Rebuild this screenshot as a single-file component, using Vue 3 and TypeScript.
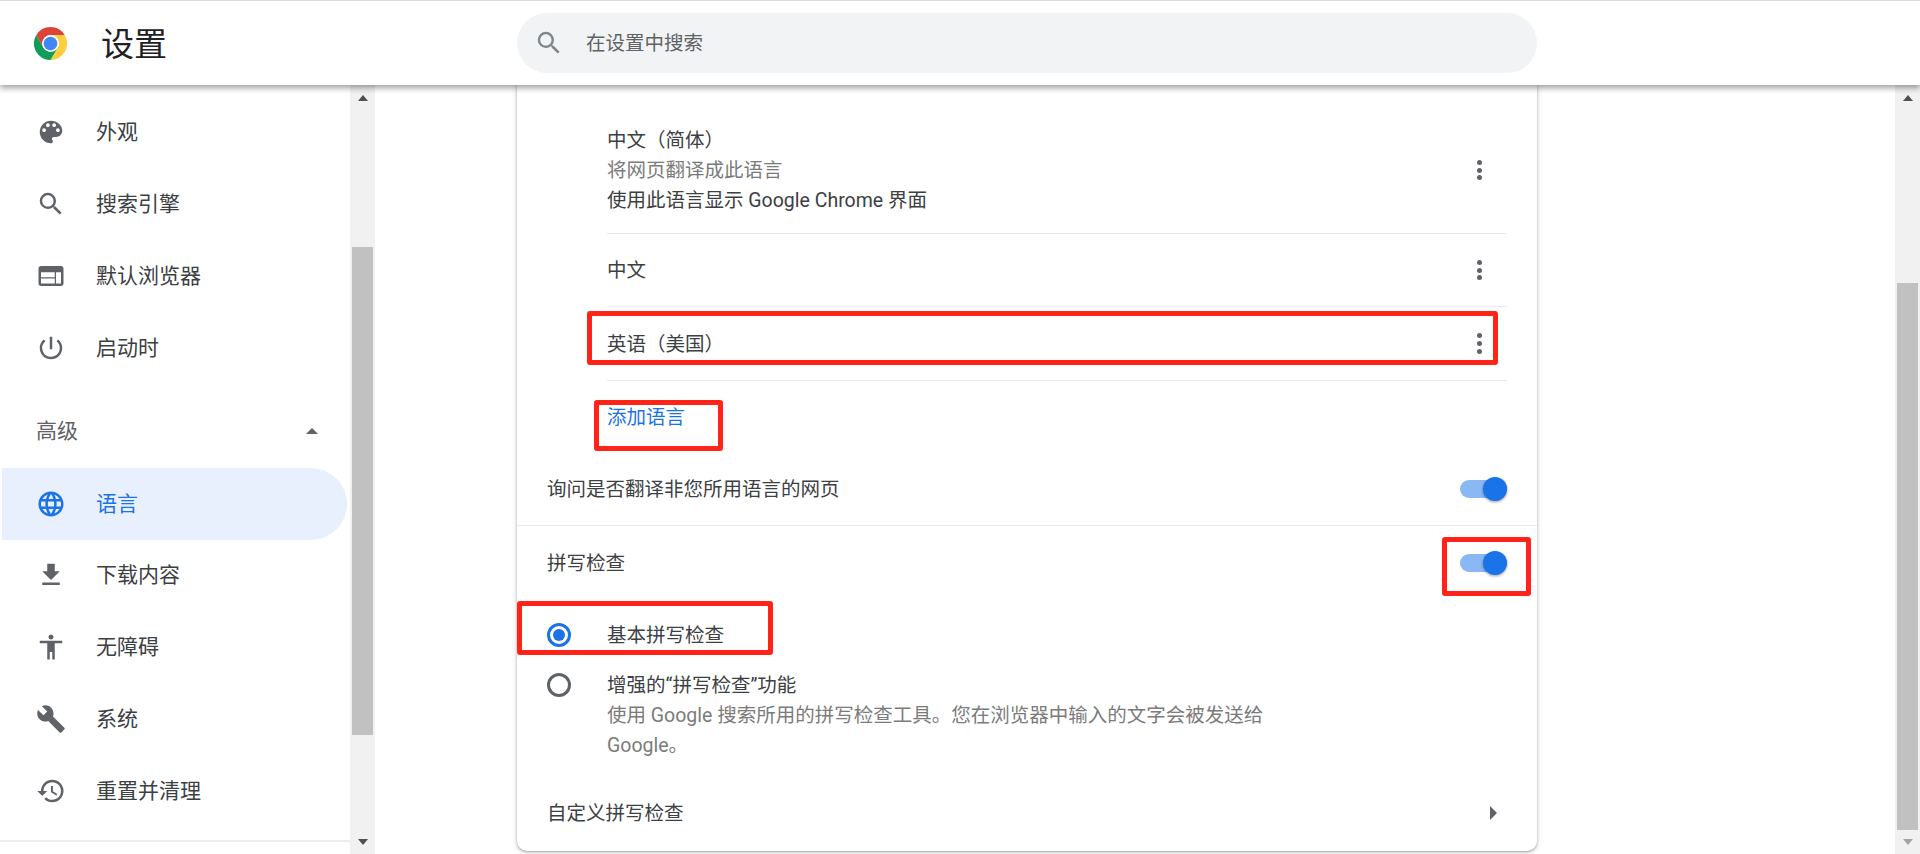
<script setup lang="ts">
interface NavItem {
  label: string;
  icon: string;
  active?: boolean;
}

const paths: Record<string, string> = {
  palette:
    'M12 3a9 9 0 0 0 0 18c.83 0 1.5-.67 1.5-1.5 0-.39-.15-.74-.39-1.01-.23-.26-.38-.61-.38-.99 0-.83.67-1.5 1.5-1.5H16c2.76 0 5-2.24 5-5 0-4.42-4.03-8-9-8zm-5.5 9c-.83 0-1.5-.67-1.5-1.5S5.67 9 6.5 9 8 9.67 8 10.5 7.33 12 6.5 12zm3-4C8.67 8 8 7.33 8 6.5S8.67 5 9.5 5s1.5.67 1.5 1.5S10.33 8 9.5 8zm5 0c-.83 0-1.5-.67-1.5-1.5S13.67 5 14.5 5s1.5.67 1.5 1.5S15.33 8 14.5 8zm3 4c-.83 0-1.5-.67-1.5-1.5S16.67 9 17.5 9s1.5.67 1.5 1.5-.67 1.5-1.5 1.5z',
  search:
    'M15.5 14h-.79l-.28-.27A6.471 6.471 0 0 0 16 9.5 6.5 6.5 0 1 0 9.5 16c1.61 0 3.09-.59 4.23-1.57l.27.28v.79l5 4.99L20.49 19l-4.99-5zm-6 0C7.01 14 5 11.99 5 9.5S7.01 5 9.5 5 14 7.01 14 9.5 11.99 14 9.5 14z',
  web: 'M20 4H4c-1.1 0-2 .9-2 2v12c0 1.1.9 2 2 2h16c1.1 0 2-.9 2-2V6c0-1.1-.9-2-2-2zm-5 14H4v-4h11v4zm0-5H4V9h11v4zm5 5h-4V9h4v9z',
  power:
    'M13 3h-2v10h2V3zm4.83 2.17l-1.42 1.42A6.92 6.92 0 0 1 19 12c0 3.87-3.13 7-7 7A6.995 6.995 0 0 1 7.58 6.58L6.17 5.17A8.932 8.932 0 0 0 3 12a9 9 0 0 0 18 0c0-2.74-1.23-5.18-3.17-6.83z',
  language:
    'M11.99 2C6.47 2 2 6.48 2 12s4.47 10 9.99 10C17.52 22 22 17.52 22 12S17.52 2 11.99 2zm6.93 6h-2.95a15.65 15.65 0 0 0-1.38-3.56A8.03 8.03 0 0 1 18.92 8zM12 4.04c.83 1.2 1.48 2.53 1.91 3.96h-3.82c.43-1.43 1.08-2.76 1.91-3.96zM4.26 14C4.1 13.36 4 12.69 4 12s.1-1.36.26-2h3.38c-.08.66-.14 1.32-.14 2 0 .68.06 1.34.14 2H4.26zm.82 2h2.95c.32 1.25.78 2.45 1.38 3.56A7.987 7.987 0 0 1 5.08 16zm2.95-8H5.08a7.987 7.987 0 0 1 4.33-3.56A15.65 15.65 0 0 0 8.03 8zM12 19.96c-.83-1.2-1.48-2.53-1.91-3.96h3.82c-.43 1.43-1.08 2.76-1.91 3.96zM14.34 14H9.66c-.09-.66-.16-1.32-.16-2 0-.68.07-1.35.16-2h4.68c.09.65.16 1.32.16 2 0 .68-.07 1.34-.16 2zm.25 5.56c.6-1.11 1.06-2.31 1.38-3.56h2.95a8.03 8.03 0 0 1-4.33 3.56zM16.36 14c.08-.66.14-1.32.14-2 0-.68-.06-1.34-.14-2h3.38c.16.64.26 1.31.26 2s-.1 1.36-.26 2h-3.38z',
  download: 'M19 9h-4V3H9v6H5l7 7 7-7zM5 18v2h14v-2H5z',
  accessibility:
    'M12 2c1.1 0 2 .9 2 2s-.9 2-2 2-2-.9-2-2 .9-2 2-2zm9 7h-6v13h-2v-6h-2v6H9V9H3V7h18v2z',
  build:
    'M22.7 19l-9.1-9.1c.9-2.3.4-5-1.5-6.9-2-2-5-2.4-7.4-1.3L9 6 6 9 1.6 4.7C.4 7.1.9 10.1 2.9 12.1c1.9 1.9 4.6 2.4 6.9 1.5l9.1 9.1c.4.4 1 .4 1.4 0l2.3-2.3c.5-.4.5-1.1.1-1.4z',
  restore:
    'M13 3a9 9 0 0 0-9 9H1l3.89 3.89.07.14L9 12H6c0-3.87 3.13-7 7-7s7 3.13 7 7-3.13 7-7 7c-1.93 0-3.68-.79-4.94-2.06l-1.42 1.42A8.954 8.954 0 0 0 13 21a9 9 0 0 0 0-18zm-1 5v5l4.28 2.54.72-1.21-3.5-2.08V8H12z',
};

const topItems: NavItem[] = [
  { label: '外观', icon: 'palette' },
  { label: '搜索引擎', icon: 'search' },
  { label: '默认浏览器', icon: 'web' },
  { label: '启动时', icon: 'power' },
];

const advancedItems: NavItem[] = [
  { label: '语言', icon: 'language', active: true },
  { label: '下载内容', icon: 'download' },
  { label: '无障碍', icon: 'accessibility' },
  { label: '系统', icon: 'build' },
  { label: '重置并清理', icon: 'restore' },
];

const redSector: string =
  'M24 0A24 24 0 0 0 3.2 12L13.6 30A12 12 0 0 1 24 12H44.8A24 24 0 0 0 24 0z';
</script>

<template>
  <div class="page">
    <header class="topbar">
      <div class="brand">
        <svg class="logo" viewBox="0 0 48 48">
          <path fill="#db4437" :d="redSector" />
          <path fill="#ffcd40" :d="redSector" transform="rotate(120 24 24)" />
          <path fill="#0f9d58" :d="redSector" transform="rotate(240 24 24)" />
          <circle cx="24" cy="24" r="12" fill="#fff" />
          <circle cx="24" cy="24" r="10" fill="#4285f4" />
        </svg>
        <h1 class="title">设置</h1>
      </div>
      <div class="search">
        <svg class="search-icon" viewBox="0 0 24 24"><path :d="paths.search" /></svg>
        <span class="txt">在设置中搜索</span>
      </div>
    </header>

    <div class="body">
      <aside class="sidebar">
        <nav class="nav">
          <a v-for="item in topItems" :key="item.label" class="nav-item">
            <svg class="nav-icon" viewBox="0 0 24 24"><path :d="paths[item.icon]" /></svg>
            <span>{{ item.label }}</span>
          </a>
          <div class="advanced">
            <span>高级</span>
            <i class="caret"></i>
          </div>
          <a
            v-for="item in advancedItems"
            :key="item.label"
            class="nav-item"
            :class="{ active: item.active }"
          >
            <svg class="nav-icon" viewBox="0 0 24 24"><path :d="paths[item.icon]" /></svg>
            <span>{{ item.label }}</span>
          </a>
        </nav>
        <div class="nav-rule"></div>
      </aside>

      <div class="scrollbar side-scroll">
        <i class="arrow up"></i>
        <div class="thumb"></div>
        <i class="arrow down"></i>
      </div>

      <main class="content">
        <section class="card">
          <div class="lang-list">
            <div class="lang-row first">
              <div class="txt">
                <div>中文（简体）</div>
                <div class="muted">将网页翻译成此语言</div>
                <div>使用此语言显示 Google Chrome 界面</div>
              </div>
              <span class="dots"><i></i><i></i><i></i></span>
            </div>
            <div class="lang-row">
              <div class="txt">中文</div>
              <span class="dots"><i></i><i></i><i></i></span>
            </div>
            <div class="lang-row third">
              <div class="txt">英语（美国）</div>
              <span class="dots"><i></i><i></i><i></i></span>
            </div>
            <div class="add-lang"><span class="txt">添加语言</span></div>
          </div>

          <div class="setting translate">
            <span class="txt">询问是否翻译非您所用语言的网页</span>
            <span class="toggle"><i></i></span>
          </div>
          <div class="setting spell">
            <span class="txt">拼写检查</span>
            <span class="toggle"><i></i></span>
          </div>

          <div class="radio-row basic">
            <span class="radio checked"><i></i></span>
            <span class="txt">基本拼写检查</span>
          </div>
          <div class="radio-row enhanced">
            <span class="radio"></span>
            <div class="radio-text">
              <div>增强的“拼写检查”功能</div>
              <div class="muted">使用 Google 搜索所用的拼写检查工具。您在浏览器中输入的文字会被发送给 Google。</div>
            </div>
          </div>

          <div class="setting custom">
            <span class="txt">自定义拼写检查</span>
            <i class="chevron"></i>
          </div>

          <div class="mark mark-english"></div>
          <div class="mark mark-add"></div>
          <div class="mark mark-toggle"></div>
          <div class="mark mark-radio"></div>
        </section>
      </main>

      <div class="scrollbar page-scroll">
        <i class="arrow up"></i>
        <div class="thumb"></div>
        <i class="arrow down light"></i>
      </div>
    </div>
  </div>
</template>

<style>
html,
body {
  margin: 0;
  background: #fff;
  overflow: hidden;
}
</style>

<style scoped>
.page {
  height: 854px;
  display: flex;
  flex-direction: column;
  overflow: hidden;
  color: #3c4043;
  font-family: Roboto, "Noto Sans CJK SC", sans-serif;
  font-size: 19.5px;
  line-height: 30px;
}

/* centred rows: 2px of top padding moves the text down by one pixel */
.txt {
  padding-top: 2px;
}

.topbar {
  position: relative;
  z-index: 2;
  flex: 0 0 85px;
  box-sizing: border-box;
  display: flex;
  align-items: center;
  background: #fff;
  border-top: 1px solid #dadce0;
  box-shadow: 0 3px 6px rgba(0, 0, 0, 0.38);
}

.brand {
  flex: 0 0 517px;
  display: flex;
  align-items: center;
}

.logo {
  width: 33px;
  height: 33px;
  margin-left: 34px;
}

.title {
  margin: 3px 0 0 34px;
  font-size: 33px;
  line-height: 40px;
  font-weight: 400;
  color: #202124;
}

.search {
  width: 1020px;
  height: 60px;
  box-sizing: border-box;
  display: flex;
  align-items: center;
  gap: 22px;
  padding-left: 17px;
  border-radius: 30px;
  background: #f1f3f4;
  color: #5f6368;
}

.search-icon {
  width: 30px;
  height: 30px;
  fill: #80868b;
}

.body {
  flex: 1;
  display: flex;
  min-height: 0;
}

.sidebar {
  flex: 0 0 350px;
  display: flex;
  flex-direction: column;
  font-size: 21px;
}

.nav {
  flex: 1;
  padding-top: 11px;
}

.nav-item {
  height: 72px;
  display: flex;
  align-items: center;
  gap: 30px;
  padding-left: 36px;
}

.nav-item.active {
  margin: 1px 3px -1px 2px;
  padding-left: 34px;
  border-radius: 0 36px 36px 0;
  background: #e8f0fe;
  color: #1a73e8;
}

.nav-icon {
  width: 30px;
  height: 30px;
  fill: #5f6368;
}

.active .nav-icon {
  fill: #1a73e8;
}

.advanced {
  height: 72px;
  margin-top: 11px;
  padding: 0 32px 0 36px;
  display: flex;
  align-items: center;
  justify-content: space-between;
  color: #5f6368;
}

.caret {
  width: 0;
  height: 0;
  border-left: 6.5px solid transparent;
  border-right: 6.5px solid transparent;
  border-bottom: 6.5px solid #5f6368;
}

.nav-rule {
  height: 2px;
  margin-bottom: 12px;
  background: #eceded;
}

.scrollbar {
  flex: 0 0 25px;
  display: flex;
  flex-direction: column;
  align-items: center;
  background: #f1f1f1;
}

.thumb {
  width: 21px;
  background: #c1c1c1;
}

.side-scroll .thumb {
  height: 488px;
  margin-top: 162px;
}

.page-scroll .thumb {
  height: 547px;
  margin-top: 198px;
}

.arrow {
  width: 0;
  height: 0;
  border-left: 5.5px solid transparent;
  border-right: 5.5px solid transparent;
}

.arrow.up {
  margin-top: 10px;
  margin-bottom: -16px;
  border-bottom: 6px solid #505050;
}

.arrow.down {
  border-top: 6px solid #505050;
}

.arrow.down.light {
  border-top-color: #a3a3a3;
}

.side-scroll .arrow.down {
  margin-top: 104px;
}

.page-scroll .arrow.down {
  margin-top: 9px;
}

.content {
  flex: 1;
  min-width: 0;
  padding-left: 142px;
}

.card {
  position: relative;
  width: 1020px;
  height: 766px;
  border-radius: 0 0 10px 10px;
  background: #fff;
  box-shadow: 0 1px 2px rgba(60, 64, 67, 0.35), 0 1px 4px 1px rgba(60, 64, 67, 0.18);
}

.lang-list {
  padding: 0 30px 0 90px;
}

.lang-row {
  height: 72px;
  display: flex;
  align-items: center;
  justify-content: space-between;
  border-bottom: 1px solid #e8eaed;
}

.lang-row.first {
  box-sizing: border-box;
  height: 149px;
  padding-top: 22px;
}

.lang-row.third {
  height: 73px;
}

.muted {
  color: #7b7b7b;
}

.dots {
  display: flex;
  flex-direction: column;
  gap: 2.6px;
  margin-right: 25px;
}

.dots i {
  width: 5px;
  height: 5px;
  border-radius: 50%;
  background: #5f6368;
}

.add-lang {
  height: 72px;
  display: flex;
  align-items: center;
  color: #1a73e8;
}

.setting {
  display: flex;
  align-items: center;
  justify-content: space-between;
  padding: 0 30px;
}

.translate {
  height: 72px;
  border-bottom: 1px solid #e8eaed;
}

.spell {
  height: 74px;
}

.toggle {
  position: relative;
  width: 47px;
  height: 18px;
  border-radius: 9px;
  background: #8ab8f4;
}

.toggle i {
  position: absolute;
  right: 0;
  top: -3px;
  width: 24px;
  height: 24px;
  border-radius: 50%;
  background: #1a73e8;
  box-shadow: 0 1px 3px rgba(0, 0, 0, 0.4);
}

.radio-row {
  display: flex;
  gap: 36px;
  padding-left: 30px;
}

.basic {
  height: 70px;
  align-items: center;
}

.enhanced {
  height: 107px;
  align-items: flex-start;
}

.radio {
  flex: 0 0 24px;
  height: 24px;
  box-sizing: border-box;
  display: flex;
  align-items: center;
  justify-content: center;
  border: 3px solid #5f6368;
  border-radius: 50%;
}

.enhanced .radio {
  margin-top: 3px;
}

.radio.checked {
  border-color: #1a73e8;
}

.radio.checked i {
  width: 12px;
  height: 12px;
  border-radius: 50%;
  background: #1a73e8;
}

.radio-text {
  width: 680px;
  padding-top: 1px;
}

.custom {
  height: 72px;
}

.chevron {
  width: 0;
  height: 0;
  margin-right: 10px;
  border-top: 7px solid transparent;
  border-bottom: 7px solid transparent;
  border-left: 7px solid #5f6368;
}

.mark {
  position: absolute;
  box-sizing: border-box;
  border: 5px solid #ff2318;
  border-radius: 3px;
}

.mark-english {
  left: 70px;
  top: 226px;
  width: 911px;
  height: 54px;
}

.mark-add {
  left: 77px;
  top: 315px;
  width: 129px;
  height: 51px;
}

.mark-toggle {
  left: 925px;
  top: 452px;
  width: 89px;
  height: 59px;
}

.mark-radio {
  left: 0;
  top: 516px;
  width: 256px;
  height: 54px;
}
</style>
